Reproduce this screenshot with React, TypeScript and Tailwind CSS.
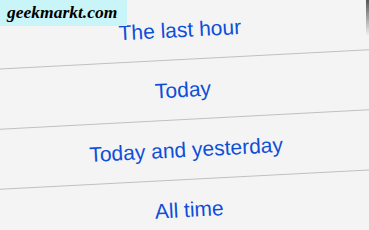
const options = ['The last hour', 'Today', 'Today and yesterday', 'All time'];

export default function App() {
  return (
    <div className="relative h-[230px] w-[369px] overflow-hidden bg-[#f4f4f4]">
      {/* action sheet, photographed at a slight tilt */}
      <div className="-ml-[20px] -mt-[1px] w-[409px] -rotate-3">
        {options.map((label, i) => (
          <div
            key={label}
            className={`flex h-[60px] items-center justify-center ${i > 0 ? 'border-t border-[#c0c0c0]' : ''}`}
          >
            <span className="pt-[1px] text-[21px] text-[#0e4ed8] [font-family:'Liberation_Sans',Arial,sans-serif]">
              {label}
            </span>
          </div>
        ))}
      </div>

      {/* screen edge */}
      <div className="absolute right-0 top-0 h-[36px] w-[3px] bg-gradient-to-b from-[#555] to-transparent" />

      {/* watermark */}
      <div className="absolute left-0 top-0 flex h-[26px] w-[127px] items-center bg-[#c9f5f9] pl-[7px]">
        <span className="text-[17.5px] font-bold italic leading-none text-black [font-family:'Liberation_Serif','DejaVu_Serif',serif]">
          geekmarkt.com
        </span>
      </div>
    </div>
  );
}
